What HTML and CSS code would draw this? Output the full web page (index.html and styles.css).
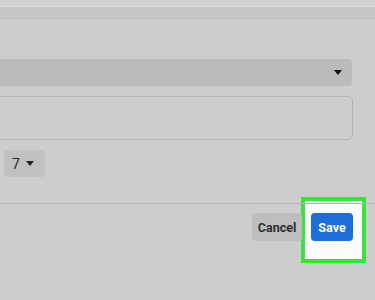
FILE: index.html
```html
<!DOCTYPE html>
<html lang="en">
<head>
    <meta charset="UTF-8">
    <meta name="viewport" content="width=device-width, initial-scale=1.0">
    <title>Edit</title>
    <link rel="stylesheet" href="styles.css">
</head>
<body>
    <div class="top-strip"></div>
    <div class="top-band"></div>

    <div class="form">
        <div class="select-wide">
            <span class="caret"></span>
        </div>

        <div class="textbox"></div>

        <div class="select-small">
            <span class="value">7</span>
            <span class="caret caret-sm"></span>
        </div>
    </div>

    <div class="divider"></div>

    <div class="actions">
        <button class="btn btn-cancel">Cancel</button>
        <span class="mark">
            <button class="btn btn-save">Save</button>
        </span>
    </div>
</body>
</html>
```

FILE: styles.css
```css
:root {
    --bg-color: #cdcdcd;
    --field-bg: #bbbbbb;
    --line-color: #b4b4b4;
    --save-color: #1c6fd7;
    --mark-color: #3be23b;
}

body {
    margin: 0;
    width: 375px;
    height: 300px;
    overflow: hidden;
    background-color: var(--bg-color);
    font-family: Roboto, "Liberation Sans", Arial, sans-serif;
    color: #333;
}

.top-strip {
    height: 6px;
    background-color: #d2d2d2;
    border-bottom: 1px solid #dcdcdc;
}

.top-band {
    height: 11px;
    background-color: #c5c5c5;
    border-bottom: 1px solid #c0c0c0;
}

.form {
    width: 353px;
    padding-top: 40px;
}

.select-wide {
    height: 27px;
    width: 352px;
    background-color: var(--field-bg);
    border-radius: 0 4px 4px 0;
    display: flex;
    align-items: center;
    justify-content: flex-end;
    padding-right: 10px;
    box-sizing: border-box;
}

.caret {
    width: 0;
    height: 0;
    border-left: 4px solid transparent;
    border-right: 4px solid transparent;
    border-top: 5px solid #111;
}

.caret-sm {
    border-top-color: #222;
}

.textbox {
    margin-top: 10px;
    margin-left: -6px;
    height: 42px;
    border: 1px solid var(--line-color);
    border-radius: 5px;
}

.select-small {
    margin-top: 10px;
    margin-left: 4px;
    width: 41px;
    height: 27px;
    background-color: #c1c1c1;
    border-radius: 3px;
    display: flex;
    align-items: center;
    gap: 6px;
    padding-left: 8px;
    box-sizing: border-box;
}

.select-small .value {
    font-size: 14px;
    color: #2a2a2a;
}

.divider {
    margin-top: 26px;
    height: 1px;
    background-color: var(--line-color);
}

.actions {
    display: flex;
    justify-content: flex-end;
    align-items: center;
    gap: 9px;
    padding: 9px 22px 0 0;
}

.btn {
    height: 28px;
    border: none;
    border-radius: 4px;
    font-family: Roboto, "Liberation Sans", Arial, sans-serif;
    font-size: 12.5px;
    font-weight: bold;
    padding: 0;
}

.btn-cancel {
    width: 50px;
    background-color: #bebebe;
    color: #2e2e2e;
}

.btn-save {
    width: 42px;
    background-color: var(--save-color);
    color: #fff;
}

/* green highlight frame drawn over the save button */
.mark {
    position: relative;
    display: flex;
}

.mark::before {
    content: "";
    position: absolute;
    left: -10px;
    right: -13px;
    top: -16px;
    bottom: -22px;
    border: 4px solid var(--mark-color);
    background-color: #fbfbfb;
    z-index: -1;
}

.mark .btn-save {
    position: relative;
}
```
